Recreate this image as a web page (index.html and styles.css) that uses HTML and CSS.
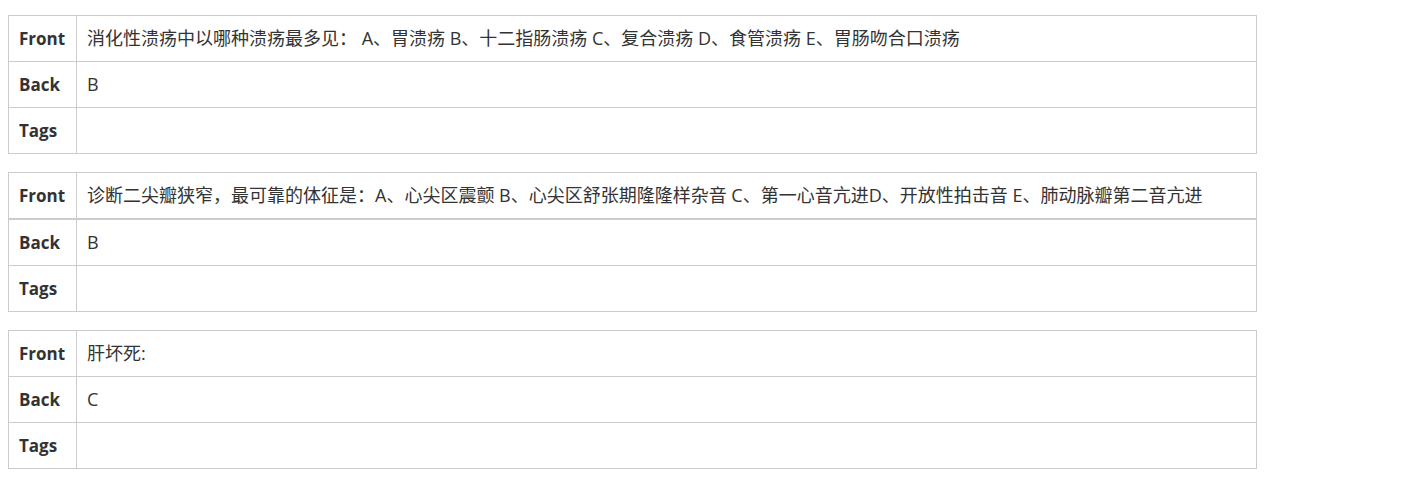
FILE: index.html
```html
<!DOCTYPE html>
<html lang="zh-CN">
<head>
<meta charset="utf-8">
<title>Cards</title>
<link rel="stylesheet" href="styles.css">
</head>
<body>
<main class="cards">
  <table class="card">
    <tr><th>Front</th><td>消化性溃疡中以哪种溃疡最多见： A、胃溃疡 B、十二指肠溃疡 C、复合溃疡 D、食管溃疡 E、胃肠吻合口溃疡</td></tr>
    <tr><th>Back</th><td>B</td></tr>
    <tr><th>Tags</th><td></td></tr>
  </table>
  <table class="card">
    <tr class="thick"><th>Front</th><td>诊断二尖瓣狭窄，最可靠的体征是：A、心尖区震颤 B、心尖区舒张期隆隆样杂音 C、第一心音亢进D、开放性拍击音 E、肺动脉瓣第二音亢进</td></tr>
    <tr><th>Back</th><td>B</td></tr>
    <tr><th>Tags</th><td></td></tr>
  </table>
  <table class="card">
    <tr><th>Front</th><td>肝坏死:</td></tr>
    <tr><th>Back</th><td>C</td></tr>
    <tr><th>Tags</th><td></td></tr>
  </table>
</main>
</body>
</html>
```
FILE: styles.css
```css
html, body {
  margin: 0;
  padding: 0;
  background: #fff;
}
body {
  padding: 8px;
  font-family: "Open Sans", "Noto Sans CJK SC", sans-serif;
  font-size: 18px;
  color: #333;
}
.cards {
  display: flex;
  flex-direction: column;
  gap: 18px;
  padding-top: 7px;
}
.card {
  width: 1249px;
  border-collapse: collapse;
}
.card th,
.card td {
  border: 1px solid #ccc;
  padding: 10px;
  line-height: 25px;
  height: 25px;
  text-align: left;
  vertical-align: middle;
  box-sizing: content-box;
}
.card th {
  width: 47px;
  font-size: 17px;
  font-weight: 700;
  color: #333;
}
.card td {
  font-weight: 400;
}
.card .thick th,
.card .thick td {
  border-bottom-width: 2px;
}
```
